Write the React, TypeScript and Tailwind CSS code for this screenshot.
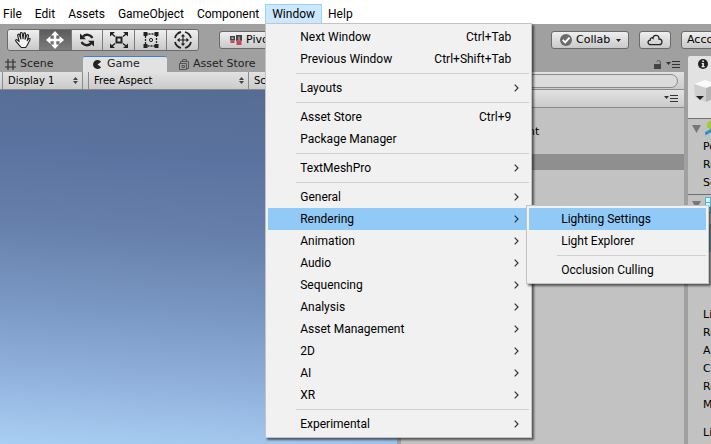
import { useState } from "react";
import clsx from "clsx";

type Entry = {
    label: string;
    keys?: string;
    arrow?: boolean;
    children?: Entry[];
} | null;

// null draws a separator
const submenu: Entry[] = [
    { label: "Lighting Settings" },
    { label: "Light Explorer" },
    null,
    { label: "Occlusion Culling" },
];

const windowMenu: Entry[] = [
    { label: "Next Window", keys: "Ctrl+Tab" },
    { label: "Previous Window", keys: "Ctrl+Shift+Tab" },
    null,
    { label: "Layouts", arrow: true },
    null,
    { label: "Asset Store", keys: "Ctrl+9" },
    { label: "Package Manager" },
    null,
    { label: "TextMeshPro", arrow: true },
    null,
    { label: "General", arrow: true },
    { label: "Rendering", arrow: true, children: submenu },
    { label: "Animation", arrow: true },
    { label: "Audio", arrow: true },
    { label: "Sequencing", arrow: true },
    { label: "Analysis", arrow: true },
    { label: "Asset Management", arrow: true },
    { label: "2D", arrow: true },
    { label: "AI", arrow: true },
    { label: "XR", arrow: true },
    null,
    { label: "Experimental", arrow: true },
];

const button = "border border-[#6a6a6a] rounded-[3px] bg-linear-to-b from-[#efefef] to-[#c9c9c9] flex items-center shrink-0";
const strip = "h-[18px] border-b border-[#8a8a8a] bg-linear-to-b from-[#e2e2e2] to-[#cbcbcb] flex shrink-0";

function Menu({ items, active, className }: { items: Entry[]; active: string; className: string }) {
    return (
        <ul
            role="menu"
            className={clsx(
                "absolute z-10 border border-[#c4c4c4] bg-[#f1f1f1] p-[2px] shadow-[2px_2px_2px_rgba(0,0,0,0.55)]",
                className
            )}
        >
            {items.map((item, i) =>
                item === null ? (
                    <li key={i} role="separator" className="h-[7px] pl-7 pt-[3px]">
                        <div className="border-t border-[#cfcfcf]" />
                    </li>
                ) : (
                    <li key={i} role="none" className="relative">
                        <button
                            role="menuitem"
                            className={clsx(
                                "h-[22px] w-full pl-8 pr-[18px] flex items-center justify-between whitespace-nowrap",
                                item.label === active && "bg-[#91c9f7]"
                            )}
                        >
                            <span>{item.label}</span>
                            {item.keys && <span>{item.keys}</span>}
                            {item.arrow && <Chevron />}
                        </button>
                        {item.children && (
                            <Menu
                                items={item.children}
                                active="Lighting Settings"
                                className="left-[258px] -top-[3px] w-[183px]"
                            />
                        )}
                    </li>
                )
            )}
        </ul>
    );
}

function Chevron() {
    return (
        <svg className="w-[5px] h-2 -mr-2" viewBox="0 0 5 8" fill="none" stroke="#333" strokeWidth="1.2">
            <path d="M.7.7 4 4 .7 7.3" />
        </svg>
    );
}

function MenuBar() {
    const [open, setOpen] = useState(true);

    return (
        <nav className="h-6 bg-white pl-[3px] pt-1 flex gap-[13px] text-xs text-black font-[Roboto,sans-serif]">
            <button>File</button>
            <button>Edit</button>
            <button>Assets</button>
            <button>GameObject</button>
            <button>Component</button>
            <div className="relative -mx-[7px]">
                <button
                    className="h-5 px-[6px] border border-[#99d1ff] bg-[#cce8ff]"
                    onClick={() => setOpen(!open)}
                >
                    Window
                </button>
                {open && <Menu items={windowMenu} active="Rendering" className="left-0 top-[19px] w-[267px]" />}
            </div>
            <button>Help</button>
        </nav>
    );
}

function HandIcon() {
    return (
        <svg className="w-[18px] h-[18px]" viewBox="0 0 18 18" fill="#f4f4f4" stroke="#222" strokeWidth="1.1" strokeLinejoin="round" strokeLinecap="round">
            <path d="M5.6 14.6 2 10.4C.9 9.100 2.200 8 3.400 9l1.800 1.600L3.700 4.500C3.400 3 5 2.600 5.500 4l1.400 4-.6-5.300C6.200 1.200 8 1 8.300 2.500L9 7.800l.7-5C9.900 1.400 11.600 1.600 11.500 3l-.4 5.300 1.700-4c.6-1.300 2.100-.7 1.700.7l-1.300 4.700 1.200-1.700c.8-1.100 2.100-.3 1.500.9l-2.700 5.400-1.600 2.200H7.300z" />
        </svg>
    );
}

function MoveIcon() {
    return (
        <svg className="w-[18px] h-[18px]" viewBox="0 0 18 18" fill="#fff">
            <path d="M9 0 13 4.500H10.300V7.700H13.500V5L18 9l-4.500 4v-2.700h-3.200v3.200H13L9 18l-4-4.500h2.700v-3.200H4.500V13L0 9l4.500-4v2.700h3.200V4.500H5z" />
        </svg>
    );
}

function RotateIcon() {
    return (
        <svg className="w-4 h-4" viewBox="0 0 16 16" fill="none" stroke="#222" strokeWidth="2.300">
            <path d="M4 4.600C6.600 1.800 11.400 2.200 13.400 6M12 11.400c-2.600 2.800-7.400 2.400-9.400-1.400" />
            <path fill="#222" stroke="none" d="M1 1.500v5.700h6zM15 14.500V8.800H9z" />
        </svg>
    );
}

function ScaleIcon() {
    return (
        <svg className="w-[18px] h-4" viewBox="0 0 18 16" fill="none" stroke="#222" strokeWidth="1.500">
            <path strokeWidth="2" d="M6.500 5.500h5v5h-5z" />
            <path d="M5 4.500 2 2M13 4.500 16 2M5 11.500 2 14M13 11.500l3 2.500" />
            <path fill="#222" stroke="none" d="M0 0h5L0 4.500zM18 0h-5l5 4.500zM0 16h5l-5-4.500zM18 16h-5l5-4.500z" />
        </svg>
    );
}

function RectIcon() {
    return (
        <svg className="w-4 h-[18px]" viewBox="0 0 16 18" fill="none" stroke="#222">
            <path strokeWidth="1.300" strokeDasharray="2 1" d="M2.500 3h11v12h-11z" />
            <circle cx="8" cy="9" r="1.600" />
            <path fill="#222" stroke="none" d="M.5 1h4v4h-4zM11.500 1h4v4h-4zM.5 13h4v4h-4zM11.500 13h4v4h-4z" />
        </svg>
    );
}

function TransformIcon() {
    return (
        <svg className="w-5 h-5" viewBox="0 0 20 20" fill="none" stroke="#222" strokeWidth="1.800">
            <path d="M2 8a8.300 8.300 0 0 1 2-3.800M8 2a8.300 8.300 0 0 0-3.800 2M12 2a8.300 8.300 0 0 1 6 6M18 12a8.300 8.300 0 0 1-6 6M8 18a8.300 8.300 0 0 1-6-6" />
            <path strokeWidth="1.200" d="M10 5v10M5 10h10" />
            <path fill="#222" stroke="none" d="m10 4 2.200 2.600H7.800zM10 16l2.200-2.600H7.800zM4 10l2.600-2.200v4.400zM16 10l-2.600-2.200v4.400z" />
        </svg>
    );
}

const tools = [
    { name: "Hand", icon: <HandIcon /> },
    { name: "Move", icon: <MoveIcon /> },
    { name: "Rotate", icon: <RotateIcon /> },
    { name: "Scale", icon: <ScaleIcon /> },
    { name: "Rect", icon: <RectIcon /> },
    { name: "Transform", icon: <TransformIcon /> },
];

function Toolbar() {
    const [tool, setTool] = useState("Move");

    return (
        <div className="h-8 flex items-center justify-between text-[11px]">
            <div className="flex items-center gap-5 pl-[7px]">
                <div className="flex w-48 h-[22px] border border-[#6a6a6a] rounded-[3px] overflow-hidden divide-x divide-[#7a7a7a]">
                    {tools.map((t) => (
                        <button
                            key={t.name}
                            aria-label={t.name}
                            onClick={() => setTool(t.name)}
                            className={clsx(
                                "flex-1 flex items-center justify-center bg-linear-to-b",
                                t.name === tool ? "from-[#5c5c5c] to-[#7c7c7c]" : "from-[#f0f0f0] to-[#c8c8c8]"
                            )}
                        >
                            {t.icon}
                        </button>
                    ))}
                </div>
                <button className={clsx(button, "h-[18px] gap-1 pl-[10px] pr-3")}>
                    <svg className="w-3 h-[10px]" viewBox="0 0 12 10">
                        <path fill="#444" d="M0 1h5v4.500H0zM6 0h6v6H6z" />
                        <path fill="#c0485a" d="M.5 5.500h4V8h-4zM6.500 5h5v5h-5z" />
                        <path fill="#c8c8c8" d="M1.500 2.500h2V4h-2zM8.500 1.500h1v4h-1z" />
                    </svg>
                    Pivot
                </button>
            </div>
            <div className="flex gap-[10px] w-40 overflow-hidden">
                <button className={clsx(button, "h-[18px] w-[78px] px-2 gap-1")}>
                    <svg className="w-3 h-3 shrink-0" viewBox="0 0 12 12">
                        <circle cx="6" cy="6" r="6" fill="#6b6b6b" />
                        <path d="m2.800 5.800 2.400 2.600 4.300-4.800" fill="none" stroke="#fff" strokeWidth="1.900" />
                    </svg>
                    Collab
                    <svg className="w-[5px] h-[3px] ml-[2px] shrink-0" viewBox="0 0 5 3">
                        <path d="M0 0h5L2.500 3z" fill="#222" />
                    </svg>
                </button>
                <button aria-label="Services" className={clsx(button, "h-[18px] w-8 justify-center")}>
                    <svg className="w-4 h-3" viewBox="0 0 16 12" fill="none" stroke="#222" strokeWidth="1.300">
                        <path d="M4 10.700C.2 10.700.2 6.300 3.200 6.200 3 4 5.200 3.300 6 4.200 6.500.2 12.200.4 12 5c3.800-.3 4 5.700.3 5.700z" />
                    </svg>
                </button>
                <button className={clsx(button, "h-[18px] px-[5px]")}>Account</button>
            </div>
        </div>
    );
}

function UpDown() {
    return (
        <svg className="w-[5px] h-[7px] shrink-0 absolute right-1 top-[5px] pointer-events-none" viewBox="0 0 5 7" fill="#444">
            <path d="M0 3h5L2.500 0zM0 4h5L2.500 7z" />
        </svg>
    );
}

function PaneMenu() {
    return (
        <svg className="w-[14px] h-[7px]" viewBox="0 0 14 7" fill="#333">
            <path d="M0 1h5L2.500 4zM6 0h8v1H6zM6 3h8v1H6zM6 6h8v1H6z" />
        </svg>
    );
}

function GamePanel() {
    return (
        <section className="flex flex-col min-w-0">
            <div className="h-4 flex text-[11px] text-[#222]">
                <button className="w-[83px] pl-[5px] flex items-center gap-1">
                    <svg className="w-[11px] h-[11px]" viewBox="0 0 11 11" stroke="#333" strokeWidth="1.200">
                        <path d="M3 0v11M8 0v11M0 3h11M0 8h11" />
                    </svg>
                    Scene
                </button>
                <button className="w-[84px] pl-[10px] flex items-center gap-[5px] rounded-t-[2px] border-t border-[#3f7fd0] bg-[#e2e2e2]">
                    <svg className="w-[9px] h-[9px]" viewBox="0 0 10 10" fill="#222">
                        <path d="M9 2A5 5 0 1 0 9 8L5 5z" />
                    </svg>
                    Game
                </button>
                <button className="pl-3 flex items-center gap-1 whitespace-nowrap">
                    <svg className="w-[10px] h-[11px]" viewBox="0 0 10 11" fill="none" stroke="#555">
                        <path d="M.5 4.500h7v6h-7zM1.500 4.500v-2h8v7h-2M3.500 2.500V.6h4v1.900M3 6.500h2.500v2H3z" />
                    </svg>
                    Asset Store
                </button>
            </div>
            <div className={clsx(strip, "text-[10px] pl-[2px]")}>
                <div className="relative w-[81px] border-x border-[#8a8a8a]">
                    <select aria-label="Display" className="appearance-none w-full h-full pl-[5px]">
                        <option>Display 1</option>
                    </select>
                    <UpDown />
                </div>
                <div className="relative w-[161px] ml-[5px] border-x border-[#8a8a8a]">
                    <select aria-label="Aspect" className="appearance-none w-full h-full pl-[5px]">
                        <option>Free Aspect</option>
                    </select>
                    <UpDown />
                </div>
                <span className="pl-[5px] leading-[18px]">Scale</span>
            </div>
            <div className="flex-1 bg-[linear-gradient(184deg,#556b90_0%,#5b73a0_22%,#6680ab_42%,#7a98c4_63%,#94b5e0_84%,#a9cff3_100%)]" />
        </section>
    );
}

function HierarchyPanel() {
    return (
        <section className="flex flex-col min-w-0">
            <div className="h-4 flex items-center justify-end gap-1 pr-1">
                <svg className="w-2 h-[9px]" viewBox="0 0 8 9">
                    <path d="M0 4h7v5H0z" fill="#444" />
                    <path d="M2.500 1.500C3 .2 6.300.2 6.300 2v2.500" fill="none" stroke="#555" />
                </svg>
                <PaneMenu />
            </div>
            <div className={clsx(strip, "items-center justify-end pr-[6px]")}>
                <input
                    aria-label="Search"
                    type="search"
                    className="w-52 h-[14px] rounded-full border border-[#8a8a8a] bg-[#dcdcdc] px-3 text-[10px]"
                />
            </div>
            <div className={clsx(strip, "items-center justify-end pr-[6px]")}>
                <PaneMenu />
            </div>
            <ul className="flex-1 bg-[#c2c2c2] pt-4 text-[11px] leading-4">
                <li className="h-4 pl-[68px]">Environment</li>
                <li className="h-[14px]" />
                <li className="h-4 bg-[#8f8f8f]" />
            </ul>
        </section>
    );
}

function Foldout({ children }: { children: React.ReactNode }) {
    return (
        <div className="h-5 pl-1 flex items-center gap-1 border-t border-[#6f6f6f]">
            <svg className="w-[9px] h-2 shrink-0" viewBox="0 0 9 8">
                <path d="M0 0h9L4.500 8z" fill="#777" />
            </svg>
            {children}
        </div>
    );
}

function InspectorPanel() {
    const transform = ["Position", "Rotation", "Scale"];
    const renderer = ["Light Probes", "Reflection Probes", "Anchor Override", "Cast Shadows", "Receive Shadows", "Motion Vectors"];

    return (
        <section className="flex flex-col min-w-0 overflow-hidden">
            <div className="h-4 rounded-tl-[2px] bg-[#e2e2e2] pl-[10px] flex items-center">
                <svg className="w-[10px] h-[10px] shrink-0" viewBox="0 0 10 10">
                    <circle cx="5" cy="5" r="5" fill="#222" />
                    <path d="M4.200 1.500h1.700v1.600H4.200zM3.700 4h2.200v3h.8v1.200H3.600V7h.7V5.100h-.6z" fill="#eee" />
                </svg>
            </div>
            <div className="h-[46px] shrink-0 bg-[#e2e2e2] pl-[6px] pt-2">
                <svg className="w-6 h-6" viewBox="0 0 24 24">
                    <path d="M0 4 11 0l12 4-11 4z" fill="#fafafa" />
                    <path d="M0 4l12 4v14L1 17z" fill="#cfcfcf" />
                    <path d="M12 8l11-4v13l-11 5z" fill="#b4b4b4" />
                    <path d="M2 16h8l-4 4z" fill="#222" />
                </svg>
            </div>
            <div className="flex-1 bg-[#c2c2c2] text-[11px] leading-[18px] whitespace-nowrap">
                <Foldout>
                    <svg className="w-4 h-4 shrink-0" viewBox="0 0 16 16" fill="none" strokeWidth="2">
                        <circle cx="6" cy="4" r="4" fill="#9ad02a" />
                        <path d="M7 9 0 13" stroke="#2f8fc8" strokeWidth="3" />
                        <path d="m7 9 7 4" stroke="#d0402a" />
                    </svg>
                </Foldout>
                <div className="pl-[15px] pb-[2px]">
                    {transform.map((t) => <p key={t}>{t}</p>)}
                </div>
                <Foldout>
                    <svg className="w-4 h-4 shrink-0" viewBox="0 0 16 16" fill="#d8f4fa" stroke="#45b5cc">
                        <path d="M.5.5h15v15H.5zM.5 5.500h15M.5 10.500h15M5.500.500v15M10.500.500v15" />
                    </svg>
                </Foldout>
                <div className="h-[92px] pt-[10px] pl-[18px]">
                    <div className="h-7 bg-[#7fa3b5]" />
                </div>
                <div className="pl-[15px]">
                    {renderer.map((r) => <p key={r}>{r}</p>)}
                    <p className="pt-[10px]">Lightmap Static</p>
                </div>
            </div>
        </section>
    );
}

export default function App() {
    return (
        <div className="min-h-screen flex flex-col overflow-hidden bg-[#a0a0a0] text-black font-[DejaVu_Sans,sans-serif]">
            <MenuBar />
            <Toolbar />
            <main className="flex-1 grid grid-cols-[minmax(0,1fr)_283px_23px] gap-x-1">
                <GamePanel />
                <HierarchyPanel />
                <InspectorPanel />
            </main>
        </div>
    );
}
